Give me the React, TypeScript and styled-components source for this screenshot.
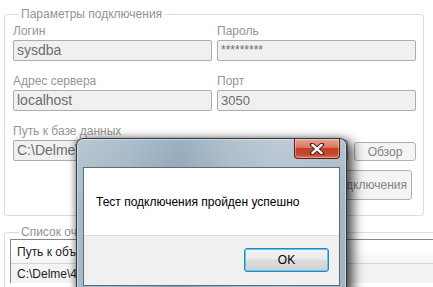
import React from 'react';
import styled, { createGlobalStyle } from 'styled-components';

const GlobalStyle = createGlobalStyle`
  html, body {
    margin: 0;
    padding: 0;
    background: #ffffff;
    overflow: hidden;
  }
  body {
    font-family: "Liberation Sans", Arial, sans-serif;
  }
`;

const Page = styled.div`
  position: relative;
  width: 433px;
  height: 287px;
  overflow: hidden;
  padding: 7px 0 0 4px;
  box-sizing: border-box;
  background: #ffffff;
`;

const GroupBox = styled.fieldset<{ $width: number; $top: number; $bottom: number }>`
  width: ${(p) => p.$width}px;
  box-sizing: border-box;
  margin: 0 0 9px 0;
  padding: ${(p) => p.$top}px 9px ${(p) => p.$bottom}px 8px;
  border: 1px solid #d5dfe5;
  border-radius: 3px;
  min-width: 0;
`;

const GroupTitle = styled.legend`
  margin-left: 6px;
  padding: 0 2px;
  font-size: 12px;
  line-height: 14px;
  color: #939393;
`;

const FieldGrid = styled.div`
  display: grid;
  grid-template-columns: 199px 199px;
  column-gap: 5px;
  row-gap: 14px;
`;

const Field = styled.div`
  display: flex;
  flex-direction: column;
`;

const FieldLabel = styled.span`
  height: 13px;
  margin-bottom: 2px;
  font-size: 12px;
  line-height: 13px;
  color: #959595;
`;

const TextBox = styled.div<{ $size?: number }>`
  height: 21px;
  box-sizing: border-box;
  padding: 0 3px;
  border: 1px solid #a9acb0;
  border-radius: 2px;
  background: #f0f0f0;
  font-size: ${(p) => p.$size ?? 14}px;
  line-height: 19px;
  color: #6d6d6d;
  white-space: nowrap;
  overflow: hidden;
`;

const PathRow = styled.div`
  grid-column: 1 / 3;
  display: flex;
  flex-direction: column;
`;

const PathLine = styled.div`
  display: flex;
  align-items: flex-end;
  gap: 6px;
`;

const PathBox = styled(TextBox)`
  flex: 1;
`;

const FormButton = styled.div<{ $w: number; $h: number }>`
  width: ${(p) => p.$w}px;
  height: ${(p) => p.$h}px;
  box-sizing: border-box;
  border: 1px solid #adb2b5;
  border-radius: 3px;
  background: #f4f4f4;
  font-size: 12px;
  color: #838383;
  display: flex;
  align-items: center;
  justify-content: center;
  white-space: nowrap;
`;

const ButtonRow = styled.div`
  display: flex;
  justify-content: flex-end;
  margin: 9px 2px 0 0;
`;

const ListView = styled.div`
  margin-left: -3px;
  border-top: 1px solid #828790;
  border-left: 1px solid #828790;
`;

const ListHeader = styled.div`
  height: 23px;
  padding-left: 6px;
  display: flex;
  align-items: center;
  border-bottom: 1px solid #d5d5d5;
  background: linear-gradient(#ffffff, #ffffff 40%, #f4f5f7);
  font-size: 12px;
  color: #1e1e1e;
`;

const ListRow = styled.div`
  height: 19px;
  padding-left: 6px;
  display: flex;
  align-items: center;
  background: #f3f3f3;
  font-size: 12px;
  color: #1e1e1e;
`;

const Window = styled.div`
  position: absolute;
  left: 76px;
  top: 138px;
  width: 271px;
  height: 156px;
  box-sizing: border-box;
  padding: 28px 6px 0 6px;
  border: 1px solid #2e3843;
  border-bottom: none;
  border-radius: 7px 7px 0 0;
  background:
    linear-gradient(180deg, rgba(255, 255, 255, 0.18), rgba(255, 255, 255, 0) 45%),
    linear-gradient(90deg, #a9bbc9 0%, #9bb0c1 20%, #889fb2 38%, #9fb3c3 55%, #b0c0cd 75%, #a3b6c5 100%);
  box-shadow: 6px 3px 12px rgba(0, 0, 0, 0.7), -2px 0 6px rgba(0, 0, 0, 0.3),
    inset 0 0 0 1px rgba(255, 255, 255, 0.4);
`;

const CloseButton = styled.div`
  position: absolute;
  top: 0;
  right: 6px;
  width: 46px;
  height: 20px;
  box-sizing: border-box;
  border: 1px solid #5b1c12;
  border-top: none;
  border-radius: 0 0 4px 4px;
  background: linear-gradient(#e7a596 0%, #d8765f 45%, #c0412a 50%, #c3472e 80%, #d9725a 100%);
  box-shadow: inset 0 0 0 1px rgba(255, 255, 255, 0.35);
  display: flex;
  align-items: center;
  justify-content: center;
`;

const WindowContent = styled.div`
  height: 117px;
  border: 1px solid #5c6b78;
  background: #ffffff;
  display: flex;
  flex-direction: column;
`;

const MessageArea = styled.div`
  height: 67px;
  padding-left: 12px;
  display: flex;
  align-items: center;
  font-size: 12px;
  color: #000000;
`;

const ButtonBar = styled.div`
  flex: 1;
  border-top: 1px solid #dfdfdf;
  background: #f0f0f0;
  display: flex;
  justify-content: flex-end;
  align-items: flex-start;
  padding: 12px 10px 0 0;
`;

const DialogButton = styled.div`
  width: 85px;
  height: 24px;
  box-sizing: border-box;
  border: 1px solid #3c7fb1;
  border-radius: 3px;
  background: linear-gradient(#f2f2f2 0%, #ebebeb 45%, #dddddd 50%, #cfcfcf 100%);
  box-shadow: inset 0 0 0 1px #48d0fe;
  font-size: 12px;
  color: #000000;
  display: flex;
  align-items: center;
  justify-content: center;
`;

const CloseGlyph = () => (
  <svg width="16" height="12" viewBox="0 0 16 12">
    <path d="M3 1.5 L13 10.5 M13 1.5 L3 10.5" stroke="#4a1a12" strokeWidth="4.2" strokeLinecap="round" />
    <path d="M3.4 1.9 L12.6 10.1 M12.6 1.9 L3.4 10.1" stroke="#ffffff" strokeWidth="2.4" strokeLinecap="round" />
  </svg>
);

const App = () => {
  return (
    <>
      <GlobalStyle />
      <Page>
        <GroupBox $width={420} $top={4} $bottom={15}>
          <GroupTitle>Параметры подключения</GroupTitle>
          <FieldGrid>
            <Field>
              <FieldLabel>Логин</FieldLabel>
              <TextBox>sysdba</TextBox>
            </Field>
            <Field>
              <FieldLabel>Пароль</FieldLabel>
              <TextBox $size={12}>*********</TextBox>
            </Field>
            <Field>
              <FieldLabel>Адрес сервера</FieldLabel>
              <TextBox>localhost</TextBox>
            </Field>
            <Field>
              <FieldLabel>Порт</FieldLabel>
              <TextBox $size={13}>3050</TextBox>
            </Field>
            <PathRow>
              <FieldLabel>Путь к базе данных</FieldLabel>
              <PathLine>
                <PathBox>C:\Delme\4444.fdb</PathBox>
                <FormButton $w={62} $h={19}>Обзор</FormButton>
              </PathLine>
            </PathRow>
          </FieldGrid>
          <ButtonRow>
            <FormButton $w={112} $h={30}>Тест подключения</FormButton>
          </ButtonRow>
        </GroupBox>
        <GroupBox $width={470} $top={0} $bottom={9}>
          <GroupTitle>Список очищаемых объектов</GroupTitle>
          <ListView>
            <ListHeader>Путь к объекту</ListHeader>
            <ListRow>C:\Delme\4444.fdb</ListRow>
          </ListView>
        </GroupBox>
        <Window>
          <CloseButton>
            <CloseGlyph />
          </CloseButton>
          <WindowContent>
            <MessageArea>Тест подключения пройден успешно</MessageArea>
            <ButtonBar>
              <DialogButton>OK</DialogButton>
            </ButtonBar>
          </WindowContent>
        </Window>
      </Page>
    </>
  );
};

export default App;
